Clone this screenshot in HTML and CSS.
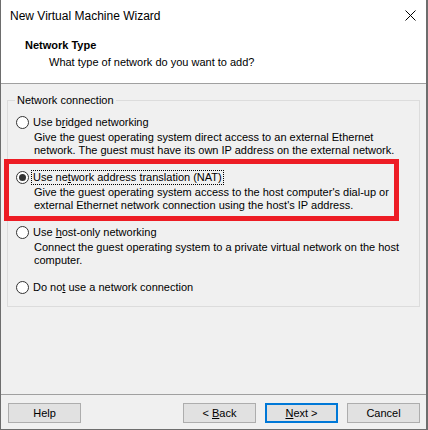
FILE: index.html
```html
<!DOCTYPE html>
<html>
<head>
<meta charset="utf-8">
<link rel="stylesheet" href="styles.css">
</head>
<body>
<div class="window">
  <div class="titlebar">
    <span class="title">New Virtual Machine Wizard</span>
    <svg class="close" width="11" height="11" viewBox="0 0 11 11"><path d="M0.5 0.5 L10.5 10.5 M10.5 0.5 L0.5 10.5" stroke="#000" stroke-width="1" fill="none"/></svg>
  </div>
  <div class="header">
    <div class="h-title">Network Type</div>
    <div class="h-sub">What type of network do you want to add?</div>
  </div>
  <div class="content">
    <div class="group">
      <span class="legend">Network connection</span>
      <div class="option first">
        <div class="radio-row"><span class="radio"></span><span class="label">Use b<u>r</u>idged networking</span></div>
        <div class="desc">Give the guest operating system direct access to an external Ethernet<br>network. The guest must have its own IP address on the external network.</div>
      </div>
      <div class="option">
        <div class="radio-row"><span class="radio checked"></span><span class="label focus">Use ne<u>t</u>work address translation (NAT)</span></div>
        <div class="desc">Give the guest operating system access to the host computer's dial-up or<br>external Ethernet network connection using the host's IP address.</div>
      </div>
      <div class="option">
        <div class="radio-row"><span class="radio"></span><span class="label">Use <u>h</u>ost-only networking</span></div>
        <div class="desc">Connect the guest operating system to a private virtual network on the host<br>computer.</div>
      </div>
      <div class="option">
        <div class="radio-row"><span class="radio"></span><span class="label">Do no<u>t</u> use a network connection</span></div>
      </div>
      <div class="highlight"></div>
    </div>
    <div class="footer">
      <button class="btn">Help</button>
      <div class="spacer"></div>
      <button class="btn">&lt; <u>B</u>ack</button>
      <button class="btn default"><u>N</u>ext &gt;</button>
      <button class="btn">Cancel</button>
    </div>
  </div>
</div>
</body>
</html>
```
FILE: styles.css
```css
html, body {
  margin: 0;
  padding: 0;
  background: #f0f0f0;
}
body {
  width: 428px;
  height: 430px;
  overflow: hidden;
  font-family: "Liberation Sans", Arial, sans-serif;
  font-size: 11px;
  color: #000;
}
.window {
  box-sizing: border-box;
  width: 428px;
  height: 430px;
  border-left: 1px solid #6d6d6d;
  border-right: 2px solid #6d6d6d;
  border-bottom: 1px solid #6d6d6d;
  display: flex;
  flex-direction: column;
  background: #f0f0f0;
}
.titlebar {
  height: 32px;
  background: #fff;
  display: flex;
  align-items: center;
  padding-left: 9px;
  padding-right: 9px;
  font-size: 12px;
}
.title {
  flex: 1;
  margin-top: -1px;
}
.close {
  margin-top: -2px;
  margin-right: 1px;
}
.header {
  height: 52px;
  background: #fff;
  border-bottom: 1px solid #a0a0a0;
  box-sizing: border-box;
  padding-left: 24px;
}
.h-title {
  font-weight: bold;
  line-height: 14px;
  margin-top: 6px;
}
.h-sub {
  line-height: 14px;
  margin-top: 3px;
  padding-left: 24px;
}
.content {
  flex: 1;
  display: flex;
  flex-direction: column;
  position: relative;
}
.group {
  position: relative;
  margin: 16px 6px 0 6px;
  height: 207px;
  box-sizing: border-box;
  border: 1px solid #dcdcdc;
  display: flex;
  flex-direction: column;
  gap: 12px;
}
.legend {
  align-self: flex-start;
  margin: -8px 0 0 7px;
  padding: 0 2px;
  background: #f0f0f0;
  line-height: 14px;
  margin-bottom: -12px;
}
.option.first {
  margin-top: 7px;
}
.radio-row {
  display: flex;
  align-items: center;
  height: 16px;
  padding-left: 8px;
}
.radio {
  box-sizing: border-box;
  width: 13px;
  height: 13px;
  border: 1px solid #333;
  border-radius: 50%;
  background: #fff;
  display: flex;
  align-items: center;
  justify-content: center;
  margin-right: 3px;
}
.radio.checked::after {
  content: "";
  width: 7px;
  height: 7px;
  border-radius: 50%;
  background: #333;
}
.label {
  line-height: 13px;
  padding: 0 1px;
}
.label.focus {
  outline: 1px dotted #000;
  outline-offset: 0;
}
.desc {
  padding-left: 26px;
  line-height: 13px;
  margin-top: 1px;
}
.highlight {
  position: absolute;
  left: -4px;
  top: 58px;
  width: 395px;
  height: 62px;
  box-sizing: border-box;
  border: 5px solid #ed1c24;
  pointer-events: none;
}
.footer {
  margin-top: auto;
  border-top: 1px solid #a0a0a0;
  height: 35px;
  box-sizing: border-box;
  display: flex;
  align-items: flex-start;
  padding: 8px 6px 0 7px;
  gap: 9px;
}
.spacer {
  flex: 1;
}
.btn {
  width: 73px;
  height: 20px;
  box-sizing: border-box;
  border: 1px solid #adadad;
  background: #e1e1e1;
  font-family: "Liberation Sans", Arial, sans-serif;
  font-size: 11px;
  color: #000;
  padding: 0;
  margin: 0;
}
.btn.default {
  border: 2px solid #0078d7;
}
```
